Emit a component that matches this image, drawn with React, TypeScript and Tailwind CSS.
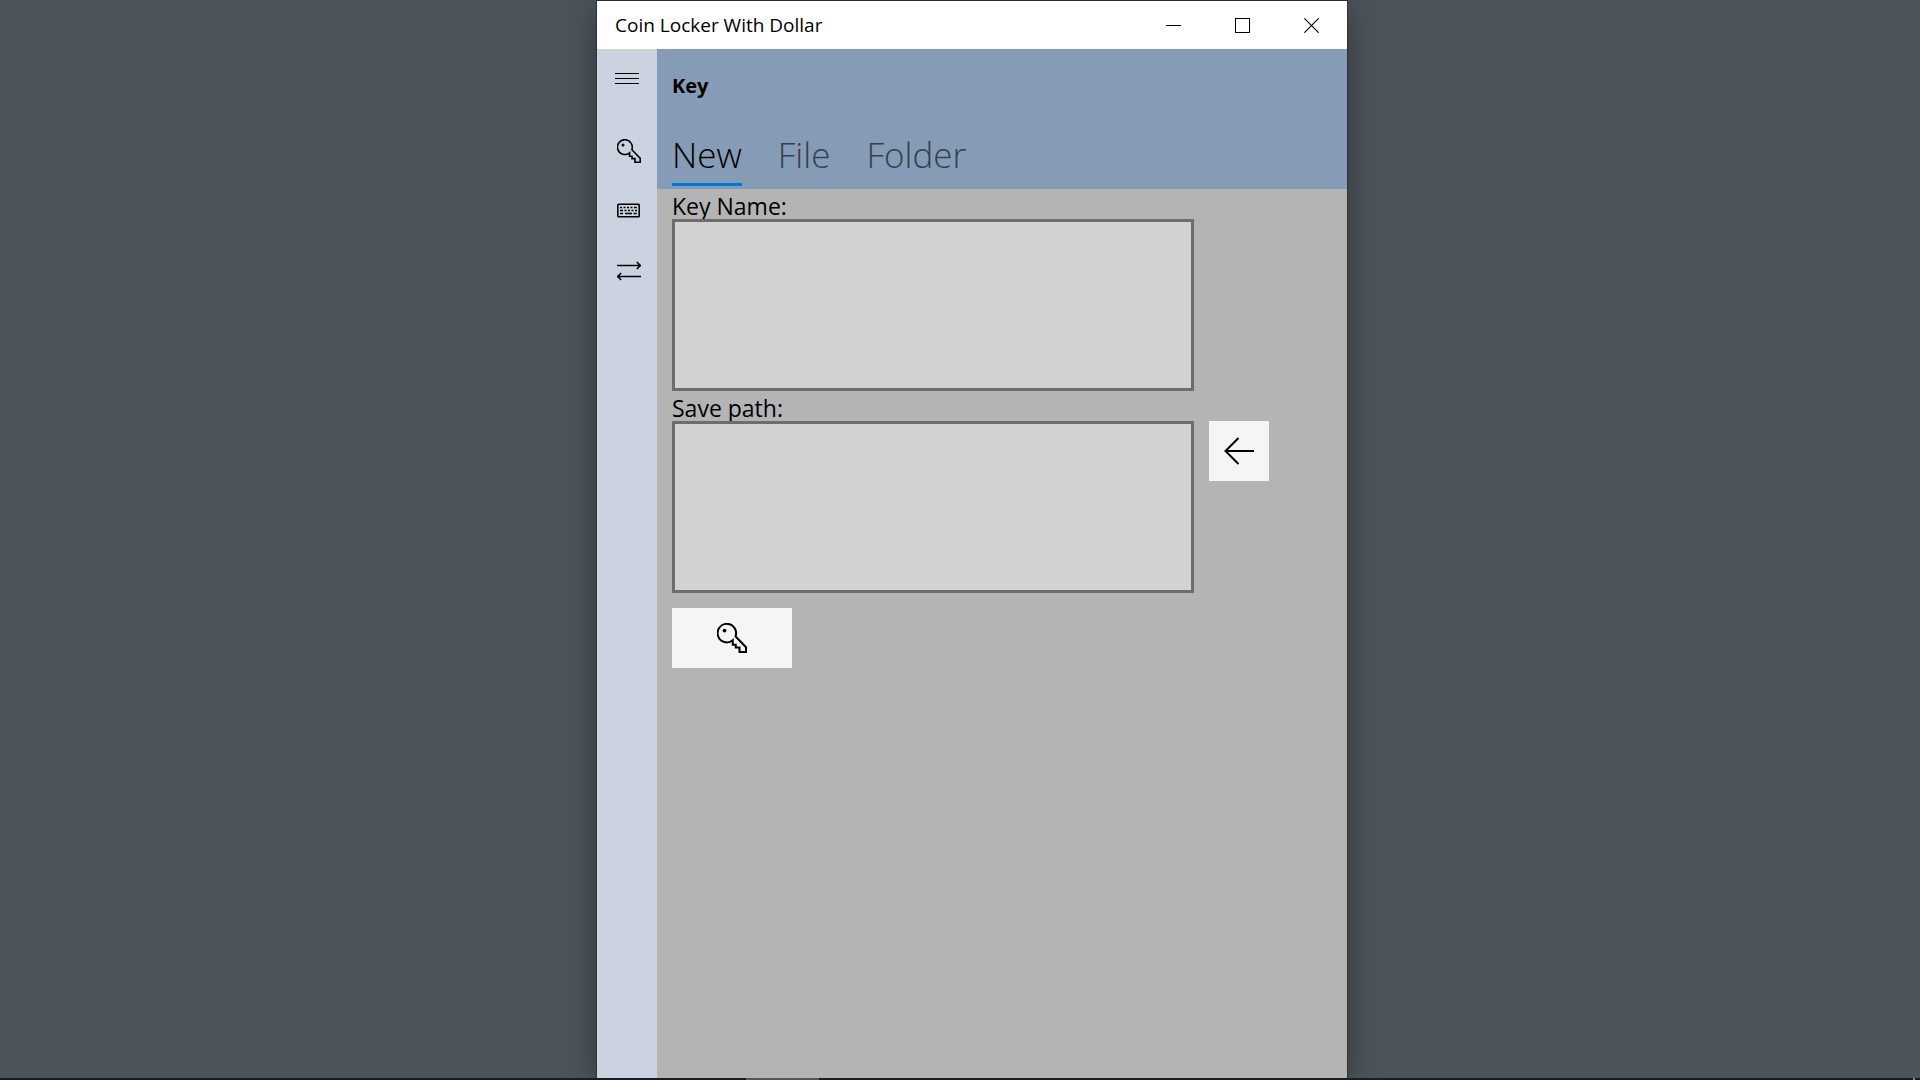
import React, { useState } from 'react';

const TABS = ['New', 'File', 'Folder'];

const KeyIcon: React.FC<{ className?: string }> = ({ className }) => (
  <svg viewBox="0 0 24 24" className={className} fill="none" stroke="currentColor" strokeWidth="1.6">
    <path d="M14.6 11.2 A7.4 7.4 0 1 0 12.6 13.8 L12.6 17.3 H15 V19.6 H18 V23.2 H23.2 V19.4 L14.9 10.8" />
    <circle cx="6" cy="6" r="1.5" fill="currentColor" stroke="none" />
  </svg>
);

const KeyboardIcon: React.FC<{ className?: string }> = ({ className }) => (
  <svg viewBox="0 0 24 24" className={className} fill="none" stroke="currentColor" strokeWidth="1.6">
    <rect x="0.8" y="5.2" width="21.4" height="12.6" rx="0.8" />
    <path d="M3 8.5h2M6.5 8.5h2M10 8.5h2M13.5 8.5h2M17 8.5h2.8M3 11.5h3M7.5 11.5h2M11 11.5h2M14.5 11.5h2M18 11.5h2M3 14.5h3M8 14.5h7M16.5 14.5h3.3" />
  </svg>
);

const SwapIcon: React.FC<{ className?: string }> = ({ className }) => (
  <svg viewBox="0 0 24 24" className={className} fill="none" stroke="currentColor" strokeWidth="1.6">
    <path d="M0 6.5h23.2M19.8 3l3.5 3.5-3.5 3.5M24 17.5H0.8M4.2 14l-3.5 3.5 3.5 3.5" />
  </svg>
);

const NAV = [
  { label: 'Key', Icon: KeyIcon },
  { label: 'Keyboard', Icon: KeyboardIcon },
  { label: 'Convert', Icon: SwapIcon },
];

const TitleBar: React.FC = () => (
  <div className="flex h-12 shrink-0 items-center justify-between bg-white pl-[18px] pr-px text-black">
    <h1 className="text-[19px] leading-6">Coin Locker With Dollar</h1>
    <div className="flex h-full">
      <button aria-label="Minimize" className="flex w-[69px] items-center justify-center">
        <svg width="15" height="16" fill="none" stroke="currentColor"><path d="M0 8.5h15" /></svg>
      </button>
      <button aria-label="Maximize" className="flex w-[69px] items-center justify-center">
        <svg width="15" height="16" fill="none" stroke="currentColor"><rect x="0.5" y="1.5" width="14" height="14" /></svg>
      </button>
      <button aria-label="Close" className="flex w-[69px] items-center justify-center">
        <svg width="15" height="16" fill="none" stroke="currentColor" strokeWidth="1.2"><path d="M0.3 1.3l14.4 14.4M14.7 1.3L0.3 15.7" /></svg>
      </button>
    </div>
  </div>
);

const Sidebar: React.FC = () => (
  <nav className="flex w-[60px] shrink-0 flex-col bg-[#cad3df] text-black">
    <button aria-label="Menu" className="mb-3 flex h-[60px] items-center justify-center">
      <svg width="24" height="14" fill="none" stroke="currentColor"><path d="M0 1.5h24M0 6.5h24M0 11.5h24" /></svg>
    </button>
    {NAV.map(({ label, Icon }) => (
      <button key={label} aria-label={label} className="flex h-[60px] items-center pl-5">
        <Icon className="size-6" />
      </button>
    ))}
  </nav>
);

const labelClass = 'pt-1 text-[23px] leading-[26px]';
const boxClass = 'block h-[172px] min-w-0 flex-1 resize-none border-[3px] border-[#6d6d6d] bg-[#d2d2d2] px-3 py-2 text-[23px] outline-none';

export default function App() {
  const [tab, setTab] = useState('New');
  const [keyName, setKeyName] = useState('');
  const [savePath, setSavePath] = useState('');

  return (
    <div className="flex h-screen flex-col overflow-hidden bg-[#4c545b] font-['Open_Sans','Noto_Sans',sans-serif]">
      <div className="grid min-h-0 flex-1 grid-cols-[597fr_750fr_573fr]">
        <div className="col-start-2 flex min-w-0 flex-col border-t border-[#2b2b2d] shadow-[0_0_0_1px_#2f3336,0_8px_28px_rgba(0,0,0,0.4)]">
          <TitleBar />
          <div className="flex min-h-0 flex-1">
            <Sidebar />
            <main className="flex min-w-0 flex-1 flex-col bg-[#b4b4b4] text-black">
              <header className="flex h-[140px] flex-col justify-between bg-[#869cb6] px-[15px] pb-[3px] pt-[25px]">
                <h2 className="text-[20px] font-bold leading-6">Key</h2>
                <div role="tablist" className="flex gap-9 text-[35px] font-light leading-[48px]">
                  {TABS.map(t => (
                    <button
                      key={t} role="tab" aria-selected={tab === t} onClick={() => setTab(t)}
                      className={`border-b-[3px] pb-1 ${tab === t ? 'border-[#0078d7] text-black' : 'border-transparent text-[#36404c]'}`}
                    >
                      {t}
                    </button>
                  ))}
                </div>
              </header>

              <form className="flex flex-col pl-[15px]" onSubmit={e => e.preventDefault()}>
                <label htmlFor="key-name" className={labelClass}>Key Name:</label>
                <div className="flex gap-[15px] pr-[78px]">
                  <textarea id="key-name" value={keyName} onChange={e => setKeyName(e.target.value)} className={boxClass} />
                  <div className="w-[60px]" />
                </div>
                <label htmlFor="save-path" className={labelClass}>Save path:</label>
                <div className="flex gap-[15px] pr-[78px]">
                  <textarea id="save-path" value={savePath} onChange={e => setSavePath(e.target.value)} className={boxClass} />
                  <button type="button" aria-label="Choose path" className="flex size-[60px] items-center justify-center bg-[#f5f5f5]">
                    <svg width="30" height="30" fill="none" stroke="currentColor" strokeWidth="2">
                      <path d="M30 15H1M14.5 2L1.5 15l13 13" />
                    </svg>
                  </button>
                </div>
                <button type="submit" aria-label="Create key" className="mt-[15px] flex h-[60px] w-[120px] items-center justify-center bg-[#f5f5f5]">
                  <KeyIcon className="size-[30px]" />
                </button>
              </form>
            </main>
          </div>
        </div>
      </div>
      <div className="grid h-0.5 grid-cols-[746fr_73fr_1094fr_2fr_5fr] bg-[#1c1c1f]">
        <div className="col-start-2 bg-[#565658]" />
        <div className="col-start-4 bg-[#8a8a8c]" />
      </div>
    </div>
  );
}
